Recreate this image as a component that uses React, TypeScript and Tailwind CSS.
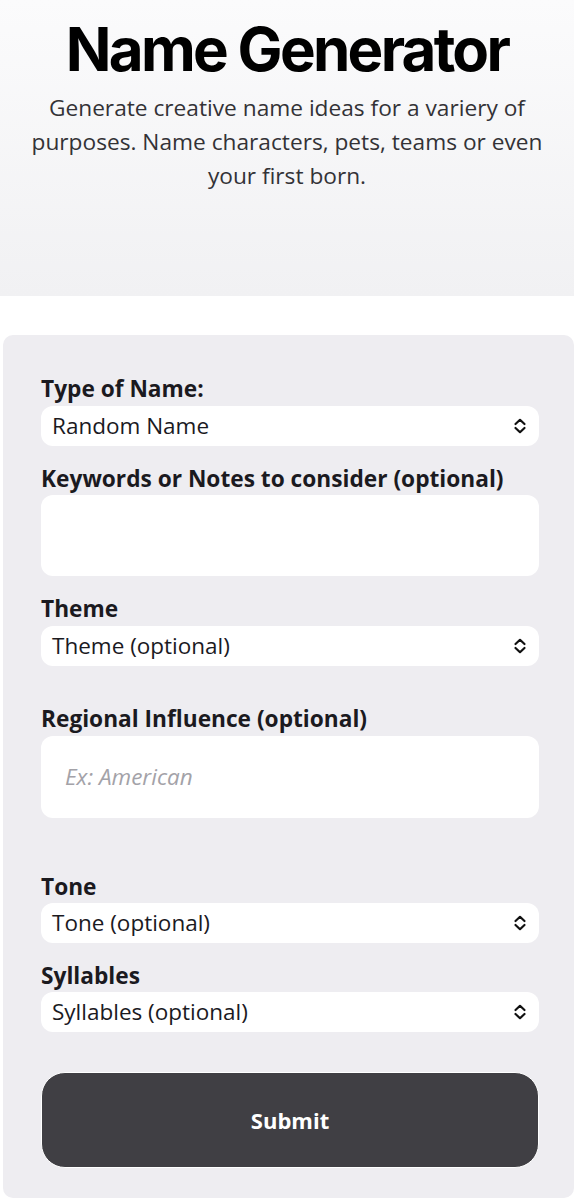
import { ReactNode } from "react";

const sans = { fontFamily: '"Open Sans", "Noto Sans", sans-serif' };

function Chevrons() {
  return (
    <svg width="14" height="16" viewBox="0 0 14 16" fill="none" className="shrink-0">
      <path d="M2.5 6 L7 1.8 L11.5 6" stroke="#111" strokeWidth="2.2" strokeLinecap="round" strokeLinejoin="round" />
      <path d="M2.5 10 L7 14.2 L11.5 10" stroke="#111" strokeWidth="2.2" strokeLinecap="round" strokeLinejoin="round" />
    </svg>
  );
}

function Label({ children, className = "" }: { children: ReactNode; className?: string }) {
  return <p className={`text-[22.7px] font-bold leading-[26px] text-[#1b1a1f] ${className}`}>{children}</p>;
}

function SelectBox({ value, className = "" }: { value: string; className?: string }) {
  return (
    <div className={`flex h-[40px] items-center justify-between rounded-[12px] bg-white pl-[11px] pr-[12px] ${className}`}>
      <span className="text-[22.5px] leading-[30px] text-[#1b1a1f]">{value}</span>
      <Chevrons />
    </div>
  );
}

export default function App() {
  return (
    <div className="min-h-[1200px] bg-white" style={sans}>
      <header className="h-[296px] bg-gradient-to-b from-[#fbfbfc] to-[#f1f1f3] pt-[17px] text-center">
        <h1
          className="text-[60px] font-bold leading-[64px] tracking-[-0.045em] text-black"
          style={{ fontFamily: "Inter, sans-serif" }}
        >
          Name Generator
        </h1>
        <p className="mx-auto mt-[10px] w-[530px] text-[22.7px] leading-[34px] text-[#333236]">
          Generate creative name ideas for a variery of purposes. Name characters, pets, teams or even your first born.
        </p>
      </header>

      <main className="ml-[3px] mt-[39px] rounded-[10px] bg-[#eeedf1] pb-[30px] pl-[38px] pr-[35px] pt-[41px]">
        <Label>Type of Name:</Label>
        <SelectBox value="Random Name" className="mt-[4px]" />

        <Label className="mt-[20px]">Keywords or Notes to consider (optional)</Label>
        <div className="mt-[3px] h-[81px] rounded-[12px] bg-white" />

        <Label className="mt-[20px]">Theme</Label>
        <SelectBox value="Theme (optional)" className="mt-[4px]" />

        <Label className="mt-[40px]">Regional Influence (optional)</Label>
        <div className="mt-[4px] flex h-[82px] items-center rounded-[12px] bg-white pl-[24px]">
          <span className="text-[22.5px] italic text-[#a3a2a8]">Ex: American</span>
        </div>

        <Label className="mt-[56px]">Tone</Label>
        <SelectBox value="Tone (optional)" className="mt-[3px]" />

        <Label className="mt-[20px]">Syllables</Label>
        <SelectBox value="Syllables (optional)" className="mt-[3px]" />

        <button className="mt-[40px] flex h-[96px] w-full items-center justify-center rounded-[24px] border border-white bg-[#403f44] text-[22px] font-bold text-white">
          Submit
        </button>
      </main>
    </div>
  );
}
